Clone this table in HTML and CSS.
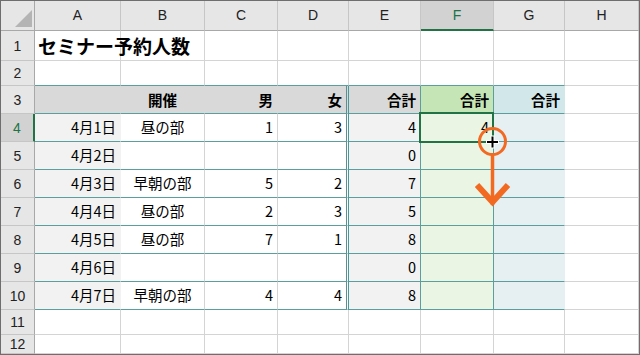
FILE: index.html
```html
<!DOCTYPE html>
<html lang="ja">
<head>
<meta charset="utf-8">
<title>セミナー予約人数</title>
<link rel="stylesheet" href="styles.css">
</head>
<body>
<div class="wrap">
  <div class="sheet">
    <!-- column headers -->
    <div class="corner"><svg width="33" height="29" viewBox="0 0 33 29"><polygon points="31,9 31,26 14,26" fill="#b4b4b4"/></svg></div>
    <div class="ch">A</div><div class="ch">B</div><div class="ch">C</div><div class="ch">D</div><div class="ch">E</div><div class="ch sel">F</div><div class="ch">G</div><div class="ch">H</div>

    <!-- row 1 -->
    <div class="rh">1</div>
    <div class="c title">セミナー予約人数</div><div class="c"></div><div class="c"></div><div class="c"></div><div class="c"></div><div class="c"></div><div class="c"></div><div class="c"></div>

    <!-- row 2 -->
    <div class="rh">2</div>
    <div class="c tb"></div><div class="c tb"></div><div class="c tb"></div><div class="c tb"></div><div class="c tb"></div><div class="c tb"></div><div class="c tb"></div><div class="c"></div>

    <!-- row 3 -->
    <div class="rh">3</div>
    <div class="c tb band"></div>
    <div class="c tb band m">開催</div>
    <div class="c tb band r">男</div>
    <div class="c tb band r dbl">女</div>
    <div class="c tb band r tr">合計</div>
    <div class="c tb bandf r tr">合計</div>
    <div class="c tb bandg r">合計</div>
    <div class="c"></div>

    <!-- row 4 -->
    <div class="rh selr">4</div>
    <div class="c tb a r d">4月1日</div><div class="c tb m d">昼の部</div><div class="c tb r d">1</div><div class="c tb r d dbl">3</div><div class="c tb e r d tr">4</div><div class="c tb f r d tr">4</div><div class="c tb g"></div><div class="c"></div>

    <!-- row 5 -->
    <div class="rh">5</div>
    <div class="c tb a r d">4月2日</div><div class="c tb m d"></div><div class="c tb r d"></div><div class="c tb r d dbl"></div><div class="c tb e r d tr">0</div><div class="c tb f r d tr"></div><div class="c tb g"></div><div class="c"></div>

    <!-- row 6 -->
    <div class="rh">6</div>
    <div class="c tb a r d">4月3日</div><div class="c tb m d">早朝の部</div><div class="c tb r d">5</div><div class="c tb r d dbl">2</div><div class="c tb e r d tr">7</div><div class="c tb f r d tr"></div><div class="c tb g"></div><div class="c"></div>

    <!-- row 7 -->
    <div class="rh">7</div>
    <div class="c tb a r d">4月4日</div><div class="c tb m d">昼の部</div><div class="c tb r d">2</div><div class="c tb r d dbl">3</div><div class="c tb e r d tr">5</div><div class="c tb f r d tr"></div><div class="c tb g"></div><div class="c"></div>

    <!-- row 8 -->
    <div class="rh">8</div>
    <div class="c tb a r d">4月5日</div><div class="c tb m d">昼の部</div><div class="c tb r d">7</div><div class="c tb r d dbl">1</div><div class="c tb e r d tr">8</div><div class="c tb f r d tr"></div><div class="c tb g"></div><div class="c"></div>

    <!-- row 9 -->
    <div class="rh">9</div>
    <div class="c tb a r d">4月6日</div><div class="c tb m d"></div><div class="c tb r d"></div><div class="c tb r d dbl"></div><div class="c tb e r d tr">0</div><div class="c tb f r d tr"></div><div class="c tb g"></div><div class="c"></div>

    <!-- row 10 -->
    <div class="rh">10</div>
    <div class="c tb a r d">4月7日</div><div class="c tb m d">早朝の部</div><div class="c tb r d">4</div><div class="c tb r d dbl">4</div><div class="c tb e r d tr">8</div><div class="c tb f r d tr"></div><div class="c tb g"></div><div class="c"></div>

    <!-- row 11 -->
    <div class="rh">11</div>
    <div class="c"></div><div class="c"></div><div class="c"></div><div class="c"></div><div class="c"></div><div class="c"></div><div class="c"></div><div class="c"></div>

    <!-- row 12 -->
    <div class="rh">12</div>
    <div class="c"></div><div class="c"></div><div class="c"></div><div class="c"></div><div class="c"></div><div class="c"></div><div class="c"></div><div class="c"></div>
  </div>

  <div class="selbox"></div>

  <svg class="cursor" width="640" height="355" viewBox="0 0 640 355">
    <circle cx="492.5" cy="141.5" r="13" fill="none" stroke="#f26a22" stroke-width="3"/>
    <line x1="492.5" y1="154" x2="492.5" y2="205" stroke="#f26a22" stroke-width="3.5"/>
    <polyline points="477,185 492.5,202 508,185" fill="none" stroke="#f26a22" stroke-width="6" stroke-linejoin="miter" stroke-miterlimit="6"/>
    <rect x="486" y="140" width="13" height="4" fill="#ffffff"/>
    <rect x="490.5" y="135.5" width="4" height="13" fill="#ffffff"/>
    <rect x="487" y="141" width="11" height="2" fill="#000000"/>
    <rect x="491.5" y="136.5" width="2" height="11" fill="#000000"/>
  </svg>
</div>
</body>
</html>
```

FILE: styles.css
```css
html, body {
  margin: 0;
  padding: 0;
  background: #ffffff;
}

.wrap {
  position: relative;
  width: 640px;
  height: 355px;
  overflow: hidden;
}

.sheet {
  box-sizing: border-box;
  width: 640px;
  height: 355px;
  border: 1px solid #6e6e6e;
  display: grid;
  grid-template-columns: 34px 86px 84px 73px 71px 72px 73px 71px 74px;
  grid-template-rows: 30px 30px 25px 28px repeat(7, 28px) 25px 19px;
  font-family: "Noto Sans CJK JP", "Noto Sans", sans-serif;
  color: #000;
  background: #fff;
}

.sheet > div {
  box-sizing: border-box;
  min-width: 0;
}

.corner {
  background: #e6e6e6;
  border-right: 1px solid #a8a8a8;
  border-bottom: 1px solid #a8a8a8;
  display: block;
}

.corner svg {
  display: block;
}

.ch {
  background: #e6e6e6;
  border-right: 1px solid #c6c6c6;
  border-bottom: 1px solid #a8a8a8;
  display: flex;
  align-items: center;
  justify-content: center;
  font-family: "Liberation Sans", "Noto Sans", sans-serif;
  font-size: 14px;
  color: #222;
  padding-bottom: 1px;
}

.ch.sel {
  background: #d2d2d2;
  border-bottom: 2px solid #217346;
  color: #217346;
  padding-bottom: 0;
}

.rh {
  background: #e6e6e6;
  border-right: 1px solid #a8a8a8;
  border-bottom: 1px solid #c6c6c6;
  display: flex;
  align-items: center;
  justify-content: center;
  font-family: "Liberation Sans", "Noto Sans", sans-serif;
  font-size: 14px;
  color: #222;
}

.rh.selr {
  background: #d2d2d2;
  border-right: 2px solid #217346;
  color: #217346;
}

.c {
  border-right: 1px solid #d4d4d4;
  border-bottom: 1px solid #d4d4d4;
  display: flex;
  align-items: center;
  padding: 0 4px;
  font-size: 14.5px;
  white-space: nowrap;
  overflow: visible;
}

.title {
  font-size: 19px;
  font-weight: bold;
  padding-left: 3px;
  position: relative;
  z-index: 1;
}

.d {
  padding-bottom: 2px;
}

.r {
  justify-content: flex-end;
}

.m {
  justify-content: center;
}

.tb {
  border-bottom-color: #5a9e9e;
}

.band {
  background: #d9d9d9;
  border-right-color: #d9d9d9;
  font-weight: bold;
}

.bandf {
  background: #c6e5b7;
  font-weight: bold;
}

.bandg {
  background: #d2e7ea;
  border-right-color: #d2e7ea;
  font-weight: bold;
}

.a {
  background: #f2f2f2;
  border-right-color: #f2f2f2;
}

.e {
  background: #f2f2f2;
}

.f {
  background: #ebf5e3;
}

.g {
  background: #e6f0f2;
  border-right-color: #e6f0f2;
}

.dbl {
  border-right: 3px double #4f9595;
}

.tr {
  border-right-color: #5a9e9e;
}

.selbox {
  position: absolute;
  left: 419px;
  top: 112px;
  width: 75px;
  height: 31px;
  box-sizing: border-box;
  border: 2px solid #217346;
  pointer-events: none;
}

.cursor {
  position: absolute;
  left: 0;
  top: 0;
  pointer-events: none;
}
```
